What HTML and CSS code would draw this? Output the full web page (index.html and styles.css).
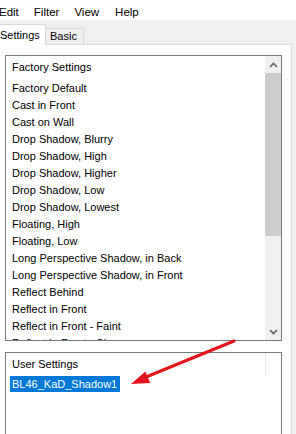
FILE: index.html
```html
<!DOCTYPE html>
<html lang="en">
  <head>
    <meta charset="UTF-8" />
    <meta name="viewport" content="width=device-width, initial-scale=1.0" />
    <title>Presets</title>
    <link rel="stylesheet" href="styles.css">
  </head>
  <body>
    <div class="menubar">
      <span>Edit</span>
      <span>Filter</span>
      <span>View</span>
      <span>Help</span>
    </div>

    <div class="tabs">
      <div class="tab active">Settings</div>
      <div class="tab">Basic</div>
    </div>

    <div class="panel">
      <div class="listbox presets">
        <div class="list-content">
          <div class="list-header">Factory Settings</div>
          <ul class="items">
            <li>Factory Default</li>
            <li>Cast in Front</li>
            <li>Cast on Wall</li>
            <li>Drop Shadow, Blurry</li>
            <li>Drop Shadow, High</li>
            <li>Drop Shadow, Higher</li>
            <li>Drop Shadow, Low</li>
            <li>Drop Shadow, Lowest</li>
            <li>Floating, High</li>
            <li>Floating, Low</li>
            <li>Long Perspective Shadow, in Back</li>
            <li>Long Perspective Shadow, in Front</li>
            <li>Reflect Behind</li>
            <li>Reflect in Front</li>
            <li>Reflect in Front - Faint</li>
            <li>Reflect in Front - Sharp</li>
          </ul>
        </div>
        <div class="scrollbar">
          <div class="sb-btn">
            <svg width="9" height="6" viewBox="0 0 9 6"><polyline points="1,5 4.5,1.5 8,5" /></svg>
          </div>
          <div class="sb-thumb"></div>
          <div class="sb-track"></div>
          <div class="sb-btn">
            <svg width="9" height="6" viewBox="0 0 9 6"><polyline points="1,1 4.5,4.5 8,1" /></svg>
          </div>
        </div>
      </div>

      <div class="listbox user">
        <div class="list-content">
          <div class="list-header divided">User Settings</div>
          <ul class="items">
            <li class="selected">BL46_KaD_Shadow1</li>
          </ul>
        </div>
      </div>
    </div>

    <!-- red annotation arrow drawn over the screenshot -->
    <svg class="annotation" width="296" height="434" viewBox="0 0 296 434">
      <line x1="234" y1="341" x2="146" y2="377" />
      <polygon points="131,384 145.4,371.4 150.2,383" />
    </svg>
  </body>
</html>
```

FILE: styles.css
```css
body {
  font-family: "Liberation Sans", Arial, sans-serif;
  font-size: 11px;
  color: #000;
  margin: 0;
  width: 296px;
  height: 434px;
  overflow: hidden;
  background-color: #f0f0f0;
  position: relative;
}

.menubar {
  height: 20px;
  box-sizing: border-box;
  padding-top: 3px;
  line-height: 18px;
  background-color: #fff;
  display: flex;
  gap: 15px;
  font-size: 11.5px;
}
.menubar span:first-child {
  margin-left: -1px;
}
.menubar span:last-child {
  margin-left: 1px;
}

.tabs {
  height: 24px;
  display: flex;
  align-items: flex-end;
}
.tab {
  box-sizing: border-box;
  background-color: #f0f0f0;
  border: 1px solid #d9d9d9;
  border-bottom: none;
}
.tab.active {
  position: relative;
  z-index: 1;
  margin-left: -2px;
  margin-bottom: -1px;
  width: 48px;
  height: 21px;
  padding-left: 1px;
  line-height: 20px;
  background-color: #fff;
}
.tab:not(.active) {
  width: 38px;
  height: 16px;
  border-left: none;
  padding-left: 4px;
  line-height: 15px;
}

.panel {
  box-sizing: border-box;
  margin-left: -2px;
  width: 294px;
  height: 390px;
  padding: 10px 0 0 6px;
  background-color: #fff;
  border: 1px solid #d9d9d9;
  border-bottom: none;
}

.listbox {
  box-sizing: border-box;
  width: 277px;
  border: 1px solid #7a7a7a;
  display: flex;
  overflow: hidden;
}
.presets {
  height: 286px;
}
.user {
  height: 82px;
  margin-top: 11px;
  border-bottom: none;
}

.list-content {
  flex: 1;
  overflow: hidden;
}
.list-header {
  height: 23px;
  line-height: 23px;
  padding-left: 6px;
}
.list-header.divided {
  width: 253px;
  border-right: 1px solid #e8e8e8;
}
.items {
  list-style: none;
  margin: 0;
  padding: 0;
}
.presets .items {
  padding-top: 1px;
}
.items li {
  height: 17px;
  line-height: 17px;
  margin-left: 4px;
  padding-left: 2px;
  white-space: nowrap;
}
.items li.selected {
  display: inline-block;
  height: 16px;
  line-height: 16px;
  padding-right: 3px;
  background-color: #0078d7;
  color: #fff;
}

.scrollbar {
  width: 16px;
  display: flex;
  flex-direction: column;
  background-color: #f0f0f0;
}
.sb-btn {
  height: 17px;
  display: flex;
  align-items: center;
  justify-content: center;
}
.sb-btn polyline {
  fill: none;
  stroke: #606060;
  stroke-width: 1.6;
}
.sb-thumb {
  height: 163px;
  background-color: #cdcdcd;
}
.sb-track {
  flex: 1;
}

.annotation {
  position: absolute;
  top: 0;
  left: 0;
  pointer-events: none;
}
.annotation line {
  stroke: #e3151b;
  stroke-width: 3;
  stroke-linecap: round;
}
.annotation polygon {
  fill: #e3151b;
}
```
